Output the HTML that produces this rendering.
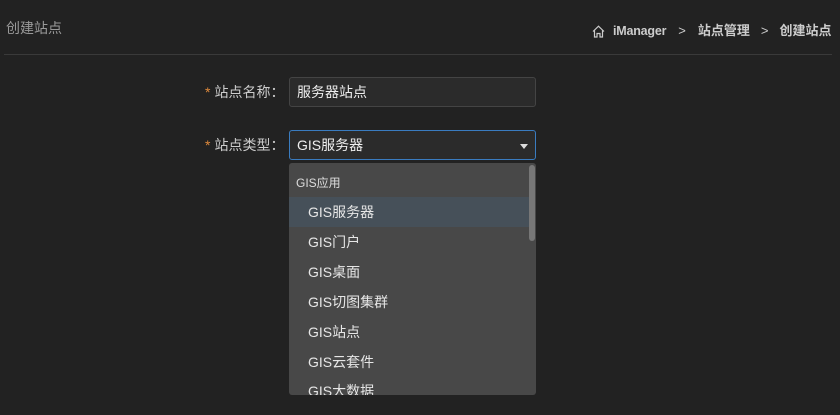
<!DOCTYPE html>
<html><head><meta charset="utf-8"><style>
*{margin:0;padding:0;box-sizing:border-box}
body{width:840px;height:415px;background:#222;overflow:hidden;font-family:"Liberation Sans","Noto Sans CJK SC",sans-serif;color:#ddd;position:relative}
.a{position:absolute;white-space:nowrap}
.title{left:6px;top:18px;font-size:14px;color:#999}
.hr{left:4px;top:54px;width:828px;height:1px;background:#3a3a3a}
.bcw{left:592px;top:22px;height:18px;display:flex;align-items:center;font-size:13px;color:#ccc;font-weight:bold;line-height:18px}
.bcw span{display:inline-block}
.lbl{font-size:14px;color:#ccc;line-height:20px}
.lbl b{color:#e08a3c;font-weight:normal;margin-right:4px}
.inp{left:289px;width:247px;height:30px;border:1px solid #444;border-radius:3px;background:#2b2b2b;font-size:14px;color:#eee;padding:0 0 0 7px;line-height:28px}
.sel{border-color:#3a7cc0;background:#2b2b2b}
.dd{left:289px;top:163px;width:247px;height:232px;background:#484848;border-radius:3px;overflow:hidden}
.dd div{position:absolute;left:0;width:240px;height:30px;line-height:30px;font-size:14px;color:#e6e6e6;padding-left:19px}
</style></head><body>
<div class="a title">创建站点</div>
<div class="a hr"></div>
<div class="a bcw">
<svg width="13" height="13" viewBox="0 0 13 13" fill="none" stroke="#ccc" stroke-width="1.2" style="margin-right:8px"><path d="M1 6.5L6.5 1.2 12 6.5M2.5 5.2V12H5V8.5h3V12h2.5V5.2"/></svg>
<span style="font-size:12.5px;letter-spacing:-0.2px">iManager</span>
<span style="font-weight:normal;margin:0 12px">&gt;</span>
<span>站点管理</span>
<span style="font-weight:normal;margin:0 11px">&gt;</span>
<span>创建站点</span>
</div>
<div class="a lbl" style="left:205px;top:82px"><b>*</b>站点名称：</div>
<div class="a inp" style="top:77px">服务器站点</div>
<div class="a lbl" style="left:205px;top:135px"><b>*</b>站点类型：</div>
<div class="a inp sel" style="top:130px">GIS服务器</div>
<svg class="a" style="left:520px;top:144px" width="8" height="5"><path d="M0 0h8L4 5z" fill="#ddd"/></svg>
<div class="a dd">
<div style="top:5px;font-size:12px;padding-left:7px;color:#ddd">GIS应用</div>
<div style="top:34px;background:#465059">GIS服务器</div>
<div style="top:64px">GIS门户</div>
<div style="top:94px">GIS桌面</div>
<div style="top:124px">GIS切图集群</div>
<div style="top:154px">GIS站点</div>
<div style="top:184px">GIS云套件</div>
<div style="top:213px">GIS大数据</div>
<span style="position:absolute;left:240px;top:2px;width:6px;height:76px;background:#777;border-radius:3px"></span>
</div>
</body></html>
